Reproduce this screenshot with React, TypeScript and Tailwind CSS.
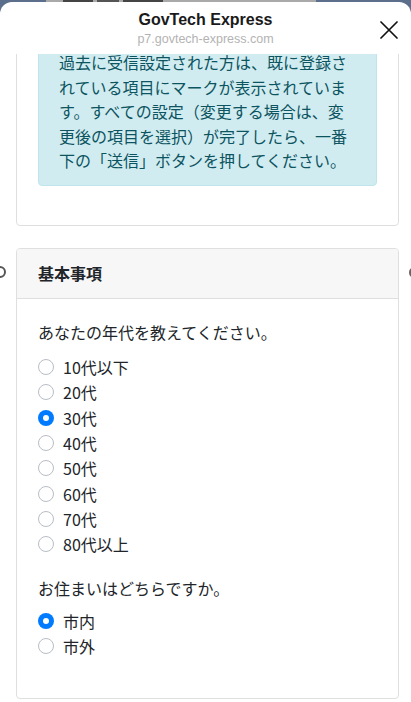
import React from "react";

const ages = ["10代以下", "20代", "30代", "40代", "50代", "60代", "70代", "80代以上"];
const areas = ["市内", "市外"];

const jp = "font-['Noto_Sans_CJK_JP','Noto_Sans',sans-serif]";

function Radio({ label, checked }: { label: string; checked?: boolean }) {
  return (
    <label className="flex h-[25.3px] items-center gap-[9px]">
      {checked ? (
        <span className="flex h-4 w-4 items-center justify-center rounded-full bg-[#007bff]">
          <span className="h-[6px] w-[6px] rounded-full bg-white" />
        </span>
      ) : (
        <span className="h-4 w-4 rounded-full border border-[#b8bec5] bg-white" />
      )}
      <span className="text-[16px] leading-6 text-[#212529]">{label}</span>
    </label>
  );
}

export default function App() {
  return (
    <div className={`relative h-[702px] w-[411px] overflow-hidden bg-[#5b6e8c] ${jp}`}>
      {/* page behind the sheet */}
      <div className="absolute left-[46px] top-0 flex h-[2px] w-[270px] gap-1 bg-[#a9a9a9] pl-[17px]">
        <span className="h-[2px] w-[30px] bg-[#444]" />
        <span className="h-[2px] w-[22px] bg-[#555]" />
        <span className="h-[2px] w-[40px] bg-[#444]" />
      </div>

      <div className="relative mt-[2px] flex h-[700px] flex-col overflow-hidden rounded-t-[12px] bg-white">
        {/* header */}
        <div className="relative flex h-[52px] shrink-0 flex-col items-center pt-[8px]">
          <div className="font-['Liberation_Sans',sans-serif] text-[16px] font-bold leading-[20px] text-[#1a1a1a]">
            GovTech Express
          </div>
          <div className="mt-[1px] font-['Liberation_Sans',sans-serif] text-[12.5px] leading-[16px] text-[#b3b3b3]">
            p7.govtech-express.com
          </div>
          <svg
            className="absolute right-[13px] top-[19px]"
            width="18"
            height="18"
            viewBox="0 0 18 18"
            fill="none"
            stroke="#111"
            strokeWidth="1.7"
            strokeLinecap="round"
          >
            <path d="M1 1 L17 17 M17 1 L1 17" />
          </svg>
        </div>

        {/* scroll area */}
        <div className="relative flex-1 overflow-hidden">
          <div className="-mt-[38px]">
            <div className="ml-4 mr-3 rounded-[4px] border border-[#dfdfdf] px-[21px] pb-5 pt-5">
              <div className="mb-[19px] rounded-[4px] border border-[#bee5eb] bg-[#d1ecf1] px-5 py-3 text-[16px] leading-[24.5px] text-[#0c5460]">
                過去に受信設定された方は、既に登録されている項目にマークが表示されています。すべての設定（変更する場合は、変更後の項目を選択）が完了したら、一番下の「送信」ボタンを押してください。
              </div>
            </div>

            <div className="ml-4 mr-3 mt-[22px] overflow-hidden rounded-[4px] border border-[#dfdfdf]">
              <div className="flex h-[50px] items-center border-b border-[#dfdfdf] bg-[#f7f7f7] px-[21px] text-[16px] font-bold text-[#212529]">
                基本事項
              </div>
              <div className="px-[21px] pb-10 pt-[21px]">
                <p className="mb-[11px] text-[16px] leading-6 text-[#212529]">あなたの年代を教えてください。</p>
                <div className="flex flex-col">
                  {ages.map((a) => (
                    <Radio key={a} label={a} checked={a === "30代"} />
                  ))}
                </div>
                <p className="mb-[8px] mt-[19px] text-[16px] leading-6 text-[#212529]">お住まいはどちらですか。</p>
                <div className="flex flex-col">
                  {areas.map((a) => (
                    <Radio key={a} label={a} checked={a === "市内"} />
                  ))}
                </div>
              </div>
            </div>
          </div>

          {/* carousel edge controls peeking in */}
          <span className="absolute left-[-6px] top-[212px] h-[12px] w-[12px] rounded-full border-2 border-[#555]" />
          <span className="absolute right-[-10px] top-[213px] h-[11px] w-[12px] rounded-full bg-[#666]" />
        </div>
      </div>
    </div>
  );
}
